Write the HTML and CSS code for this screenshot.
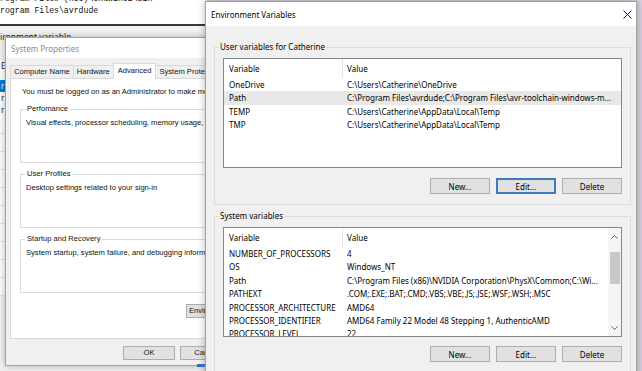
FILE: index.html
```html
<!DOCTYPE html>
<html lang="en">
<head>
    <meta charset="UTF-8">
    <title>Environment Variables</title>
    <link rel="stylesheet" href="styles.css">
</head>
<body>
<div class="desktop">

    <!-- window in the back: console + editor list -->
    <div class="bg-window">
        <div class="console">
            <div class="console-lines">
                <div>rogram Files (x86)\GnuWin32\bin</div>
                <div>rogram Files\avrdude</div>
            </div>
        </div>
        <div class="bg-dialog">
            <div class="bg-caption">ironment variable</div>
            <ul class="bg-list">
                <li class="gap">E</li>
                <li class="selected">r</li>
                <li>r</li>
                <li>r</li>
                <li class="line"></li>
                <li class="line"></li>
                <li class="line"></li>
                <li class="line"></li>
                <li class="line"></li>
                <li class="line"></li>
                <li class="line"></li>
                <li class="line"></li>
                <li class="line"></li>
                <li class="line"></li>
            </ul>
        </div>
    </div>

    <!-- System Properties -->
    <div class="window sysprops">
        <div class="titlebar">System Properties</div>
        <div class="sp-body">
            <div class="tabs">
                <div class="tab">Computer Name</div>
                <div class="tab">Hardware</div>
                <div class="tab active">Advanced</div>
                <div class="tab">System Protection</div>
                <div class="tab">Remote</div>
            </div>
            <div class="tab-panel">
                <p class="note">You must be logged on as an Administrator to make most of these changes.</p>
                <fieldset class="sp-group">
                    <legend>Perfomance</legend>
                    <p>Visual effects, processor scheduling, memory usage, and virtual memory</p>
                </fieldset>
                <fieldset class="sp-group">
                    <legend>User Profiles</legend>
                    <p>Desktop settings related to your sign-in</p>
                </fieldset>
                <fieldset class="sp-group">
                    <legend>Startup and Recovery</legend>
                    <p>System startup, system failure, and debugging information</p>
                </fieldset>
                <div class="panel-actions">
                    <button class="sp-btn env-open">Environment Variables...</button>
                </div>
            </div>
            <div class="dialog-actions">
                <button class="sp-btn">OK</button>
                <button class="sp-btn">Cancel</button>
                <button class="sp-btn">Apply</button>
            </div>
        </div>
    </div>

    <!-- Environment Variables -->
    <div class="window envvars">
        <div class="titlebar">
            <span>Environment Variables</span>
            <span class="close">
                <svg width="9" height="9" viewBox="0 0 9 9"><path d="M0.5 0.5 L8.5 8.5 M8.5 0.5 L0.5 8.5" stroke="#222" stroke-width="1" fill="none"/></svg>
            </span>
        </div>
        <div class="env-body">
            <fieldset class="env-group">
                <legend>User variables for Catherine</legend>
                <div class="list">
                    <div class="list-rows">
                        <div class="list-head"><span class="col-name">Variable</span><span class="col-value">Value</span></div>
                        <div class="list-row"><span class="col-name">OneDrive</span><span class="col-value">C:\Users\Catherine\OneDrive</span></div>
                        <div class="list-row selected"><span class="col-name">Path</span><span class="col-value">C:\Program Files\avrdude;C:\Program Files\avr-toolchain-windows-m...</span></div>
                        <div class="list-row"><span class="col-name">TEMP</span><span class="col-value">C:\Users\Catherine\AppData\Local\Temp</span></div>
                        <div class="list-row"><span class="col-name">TMP</span><span class="col-value">C:\Users\Catherine\AppData\Local\Temp</span></div>
                    </div>
                </div>
                <div class="env-actions">
                    <button class="env-btn">New...</button>
                    <button class="env-btn focused">Edit...</button>
                    <button class="env-btn">Delete</button>
                </div>
            </fieldset>

            <fieldset class="env-group">
                <legend>System variables</legend>
                <div class="list">
                    <div class="list-rows">
                        <div class="list-head"><span class="col-name">Variable</span><span class="col-value">Value</span></div>
                        <div class="list-row"><span class="col-name">NUMBER_OF_PROCESSORS</span><span class="col-value">4</span></div>
                        <div class="list-row"><span class="col-name">OS</span><span class="col-value">Windows_NT</span></div>
                        <div class="list-row"><span class="col-name">Path</span><span class="col-value">C:\Program Files (x86)\NVIDIA Corporation\PhysX\Common;C:\Wi...</span></div>
                        <div class="list-row"><span class="col-name">PATHEXT</span><span class="col-value">.COM;.EXE;.BAT;.CMD;.VBS;.VBE;.JS;.JSE;.WSF;.WSH;.MSC</span></div>
                        <div class="list-row"><span class="col-name">PROCESSOR_ARCHITECTURE</span><span class="col-value">AMD64</span></div>
                        <div class="list-row"><span class="col-name">PROCESSOR_IDENTIFIER</span><span class="col-value">AMD64 Family 22 Model 48 Stepping 1, AuthenticAMD</span></div>
                        <div class="list-row"><span class="col-name">PROCESSOR_LEVEL</span><span class="col-value">22</span></div>
                    </div>
                    <div class="scrollbar">
                        <span class="arrow">
                            <svg width="7" height="4" viewBox="0 0 7 4"><path d="M0.5 3.5 L3.5 0.5 L6.5 3.5" stroke="#606060" fill="none"/></svg>
                        </span>
                        <div class="track"><div class="thumb"></div></div>
                        <span class="arrow">
                            <svg width="7" height="4" viewBox="0 0 7 4"><path d="M0.5 0.5 L3.5 3.5 L6.5 0.5" stroke="#606060" fill="none"/></svg>
                        </span>
                    </div>
                </div>
                <div class="env-actions sys">
                    <button class="env-btn">New...</button>
                    <button class="env-btn">Edit...</button>
                    <button class="env-btn">Delete</button>
                </div>
            </fieldset>
        </div>
    </div>

    <div class="task-mark"></div>
</div>
</body>
</html>
```

FILE: styles.css
```css
body {
    margin: 0;
    font-family: "Noto Sans", sans-serif;
}

.desktop {
    position: relative;
    width: 642px;
    height: 371px;
    overflow: hidden;
    background: #d9d0e3;
}

/* back window */
.bg-window {
    width: 206px;
    height: 371px;
    display: flex;
    flex-direction: column;
    background: #f3f3f3;
}

.console {
    height: 24px;
    flex-shrink: 0;
    background: #fff;
    border-bottom: 2px solid #3a3a3a;
    overflow: hidden;
    font-family: "Liberation Mono", monospace;
    font-size: 8.2px;
    line-height: 12px;
    color: #111;
    white-space: nowrap;
}

.console-lines {
    margin-top: -7px;
}

.bg-caption {
    padding-top: 5px;
    font-size: 8.5px;
    line-height: 12px;
    color: #222;
    white-space: nowrap;
}

.bg-list {
    list-style: none;
    margin: 17px 0 0;
    padding: 0;
    width: 8px;
    background: #fff;
    font-size: 8px;
    line-height: 12px;
    color: #222;
    overflow: hidden;
}

.bg-list li {
    height: 12px;
    padding-left: 1px;
}

.bg-list .gap {
    margin-bottom: 8px;
}

.bg-list .selected {
    background: #0078d7;
    color: #fff;
}

.bg-list .line {
    height: 18px;
    box-sizing: border-box;
    border-bottom: 1px solid #e4e4e4;
}

/* windows */
.window {
    position: absolute;
    box-sizing: border-box;
    display: flex;
    flex-direction: column;
    border: 1px solid #a3a3a3;
    background: #f0f0f0;
    box-shadow: 0 0 7px rgba(0, 0, 0, 0.3);
}

.titlebar {
    flex-shrink: 0;
    display: flex;
    align-items: center;
    justify-content: space-between;
    background: #fff;
    padding-left: 5px;
    white-space: nowrap;
}

/* System Properties */
.sysprops {
    left: 5px;
    top: 37px;
    width: 300px;
    height: 329px;
    font-family: "Liberation Sans", Arial, sans-serif;
    font-size: 7.6px;
    color: #111;
}

.sysprops .titlebar {
    height: 20px;
    font-family: "Noto Sans", sans-serif;
    font-size: 8px;
    color: #8c8c8c;
}

.sp-body {
    flex: 1;
    display: flex;
    flex-direction: column;
    padding: 5px 4px 0;
}

.tabs {
    display: flex;
    align-items: flex-end;
    height: 15px;
}

.tab {
    height: 13px;
    box-sizing: border-box;
    padding: 0 3px;
    margin-right: -1px;
    border: 1px solid #d9d9d9;
    border-bottom: none;
    line-height: 12px;
    background: #f0f0f0;
    white-space: nowrap;
}

.tab.active {
    position: relative;
    z-index: 1;
    height: 16px;
    line-height: 13px;
    margin-bottom: -1px;
    padding: 0 4px;
    background: #fff;
}

.tab-panel {
    height: 261px;
    box-sizing: border-box;
    display: flex;
    flex-direction: column;
    padding: 7px 9px 0;
    background: #fff;
    border: 1px solid #d9d9d9;
}

.note {
    margin: 0 0 5px 2px;
    line-height: 12px;
    white-space: nowrap;
}

.sp-group {
    min-width: 0;
    margin: 0;
    padding: 2px 6px 33px 4px;
    border: 1px solid #dcdcdc;
}

.sp-group + .sp-group {
    margin-top: 5px;
}

.sp-group legend {
    padding: 0 2px;
    line-height: 12px;
}

.sp-group p {
    margin: 0 0 0 1px;
    line-height: 12px;
    white-space: nowrap;
    overflow: hidden;
}

.panel-actions {
    display: flex;
    justify-content: flex-end;
    margin-top: 11px;
}

.sp-btn {
    width: 52px;
    height: 14px;
    padding: 0;
    font: inherit;
    color: #111;
    line-height: 12px;
    background: #e1e1e1;
    border: 1px solid #adadad;
    white-space: nowrap;
    overflow: hidden;
}

.sp-btn.env-open {
    width: 104px;
    text-align: left;
    padding-left: 2px;
}

.dialog-actions {
    display: flex;
    justify-content: flex-end;
    gap: 5px;
    margin-top: 7px;
    padding-right: 11px;
}

/* Environment Variables */
.envvars {
    left: 205px;
    top: 1px;
    width: 432px;
    height: 390px;
    font-size: 8px;
    color: #000;
}

.envvars .titlebar {
    height: 24px;
    font-size: 8px;
}

.close {
    width: 18px;
    height: 23px;
    display: flex;
    align-items: center;
    justify-content: center;
}

.env-body {
    flex: 1;
    padding: 15px 5px 0 8px;
}

.env-group {
    min-width: 0;
    margin: 0;
    padding: 0 8px 10px 4px;
    border: 1px solid #dcdcdc;
}

.env-group + .env-group {
    margin-top: 5px;
}

.env-group legend {
    padding: 0 1px;
    line-height: 12px;
}

.list {
    display: flex;
    height: 110px;
    box-sizing: border-box;
    margin: 5px 0 0 4px;
    background: #fff;
    border: 1px solid #828790;
    overflow: hidden;
}

.list-rows {
    flex: 1;
    min-width: 0;
}

.list-head,
.list-row {
    display: flex;
    white-space: nowrap;
}

.list-head {
    height: 19px;
    line-height: 19px;
}

.list-row {
    height: 13.4px;
    line-height: 13.4px;
}

.list-row.selected {
    background: #e8e8e8;
}

.col-name {
    flex-shrink: 0;
    width: 119px;
    box-sizing: border-box;
    padding-left: 5px;
    overflow: hidden;
}

.list-head .col-name {
    border-right: 1px solid #e5e5e5;
}

.col-value {
    flex: 1;
    min-width: 0;
    padding-left: 4px;
    overflow: hidden;
}

.scrollbar {
    flex-shrink: 0;
    width: 13px;
    display: flex;
    flex-direction: column;
    background: #f5f5f5;
}

.arrow {
    height: 17px;
    display: flex;
    align-items: center;
    justify-content: center;
}

.track {
    flex: 1;
    display: flex;
    justify-content: center;
}

.thumb {
    width: 10px;
    height: 32px;
    margin-top: 7px;
    background: #c8c8c8;
}

.env-actions {
    display: flex;
    justify-content: flex-end;
    gap: 6px;
    margin-top: 10px;
}

.env-actions.sys {
    margin-top: 9px;
}

.env-btn {
    width: 60px;
    height: 16px;
    box-sizing: border-box;
    padding: 0;
    font: inherit;
    color: #000;
    background: #e1e1e1;
    border: 1px solid #adadad;
}

.env-btn.focused {
    border: 2px solid #3f7bbd;
}

.task-mark {
    position: absolute;
    left: 197px;
    top: 364px;
    width: 8px;
    height: 3px;
    background: #2f6fc0;
}
```
